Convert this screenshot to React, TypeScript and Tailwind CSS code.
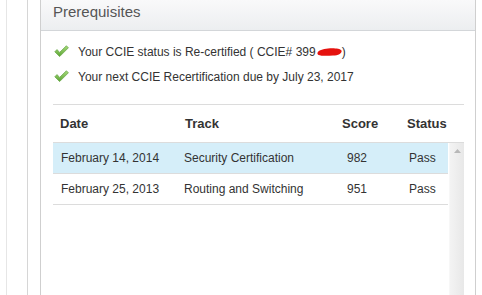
import React from "react";

function Check() {
  return (
    <svg width="15" height="13" viewBox="0 0 15 13" className="shrink-0">
      <defs>
        <linearGradient id="cg" x1="0" y1="0" x2="0" y2="1">
          <stop offset="0" stopColor="#a8dc7c" />
          <stop offset="1" stopColor="#5aa332" />
        </linearGradient>
      </defs>
      <polygon
        points="0.8,6.8 3,4.6 5.6,7.4 12.4,0.8 14.4,2.8 5.6,11.6"
        fill="url(#cg)"
        stroke="#6aa84a"
        strokeWidth="0.8"
        strokeLinejoin="round"
      />
    </svg>
  );
}

function Scribble() {
  return (
    <svg width="25" height="10" viewBox="0 0 25 10" className="inline-block align-[-1px] ml-[1px]">
      <path
        d="M0.5 6 C1 3.5, 6 2, 11 1.5 C17 1, 23 1.5, 24.5 3.5 C25.3 6, 22 8.5, 16 8.5 C10 9, 4 9, 1.5 8 C0.5 7.5, 0.3 6.8, 0.5 6 Z"
        fill="#e5120e"
      />
    </svg>
  );
}

const rows = [
  { date: "February 14, 2014", track: "Security Certification", score: "982", status: "Pass", sel: true },
  { date: "February 25, 2013", track: "Routing and Switching", score: "951", status: "Pass", sel: false },
];

export default function App() {
  return (
    <div
      className="w-[482px] h-[295px] overflow-hidden bg-white flex text-[#333]"
      style={{ fontFamily: '"Liberation Sans", Arial, sans-serif' }}
    >
      <div className="w-[6px] shrink-0" />
      <div className="w-[21px] shrink-0 border-l border-[#e6e6e6]" />
      <div className="w-[13px] shrink-0 border-l border-[#d6d6d6]" />
      <div className="w-[436px] shrink-0 border-l border-r border-[#cfcfcf] flex flex-col overflow-hidden">
        <div className="h-[31px] shrink-0 border-b border-[#d3d6d9] bg-gradient-to-b from-[#f9f9fa] to-[#eceef0] pl-[12px] pt-[3px]">
          <div className="text-[15px] leading-[18px] text-[#555]">Prerequisites</div>
        </div>
        <div className="shrink-0 pl-[12px] pt-[8px]">
          <div className="flex items-center h-[25px] text-[12px]">
            <div className="w-[25px] pl-[1px] flex items-center">
              <Check />
            </div>
            <span className="whitespace-nowrap">
              Your CCIE status is Re-certified ( CCIE# 399
              <Scribble />)
            </span>
          </div>
          <div className="flex items-center h-[25px] text-[12px]">
            <div className="w-[25px] pl-[1px] flex items-center">
              <Check />
            </div>
            <span className="whitespace-nowrap">Your next CCIE Recertification due by July 23, 2017</span>
          </div>

          <div className="mt-[15px] w-[411px] border-t border-[#dcdcdc]">
            <div className="grid grid-cols-[124px_157px_65px_1fr] h-[38px] items-center border-b border-[#dcdcdc] text-[13px] font-bold text-[#333]">
              <div className="pl-[7px]">Date</div>
              <div className="pl-[8px]">Track</div>
              <div className="pl-[8px]">Score</div>
              <div className="pl-[8px]">Status</div>
            </div>
            <div className="flex">
              <div className="w-[395px]">
                {rows.map((r) => (
                  <div
                    key={r.date}
                    className={
                      "grid grid-cols-[124px_157px_65px_1fr] h-[31px] items-center border-b border-[#dcdcdc] text-[12px] " +
                      (r.sel ? "bg-[#d5eef9]" : "bg-white")
                    }
                  >
                    <div className="pl-[8px]">{r.date}</div>
                    <div className="pl-[7px]">{r.track}</div>
                    <div className="pl-[13px]">{r.score}</div>
                    <div className="pl-[10px]">{r.status}</div>
                  </div>
                ))}
              </div>
              <div className="ml-[1px] w-[15px] h-[160px] bg-gradient-to-r from-[#f3f3f3] to-[#e8e8e8] border-l border-[#f7f7f7] flex justify-center pt-[6px]">
                <svg width="7" height="4" viewBox="0 0 7 4">
                  <polygon points="0,4 3.5,0 7,4" fill="#b8b8b8" />
                </svg>
              </div>
            </div>
          </div>
        </div>
      </div>
    </div>
  );
}
